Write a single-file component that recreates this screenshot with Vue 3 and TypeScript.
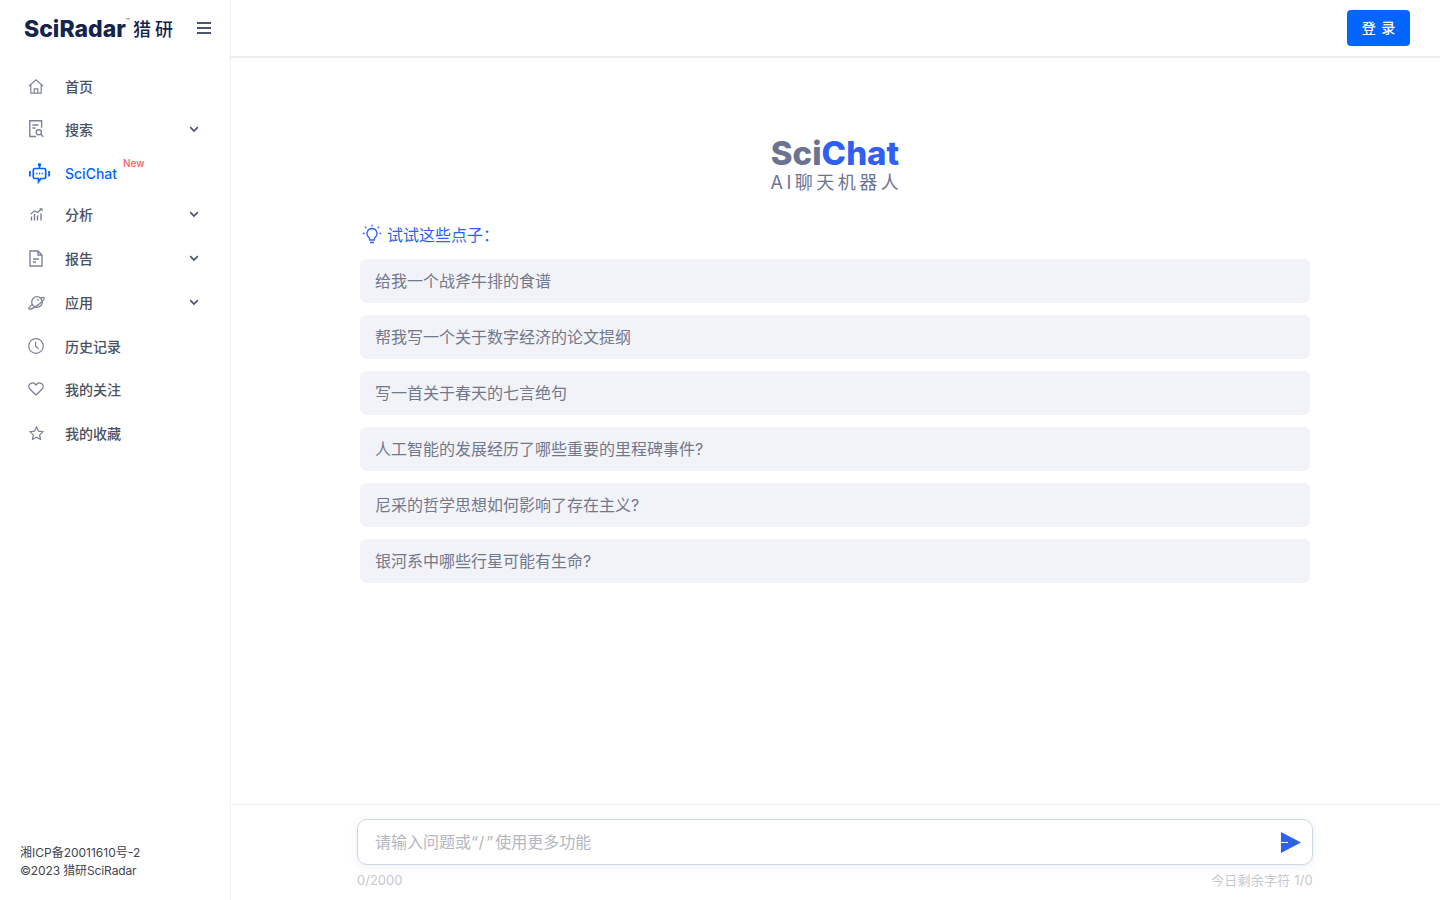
<template>
  <div class="page">
    <aside class="sidebar">
      <div class="brand">
        <span class="brand-name">SciRadar</span>
        <span class="brand-tm">™</span>
        <span class="brand-cn">猎研</span>
        <svg class="burger" width="14" height="12" viewBox="0 0 14 12">
          <path d="M0 1h14M0 6h14M0 11h14" stroke="#4b5470" stroke-width="2" fill="none" />
        </svg>
      </div>

      <nav class="nav">
        <div
          v-for="item in navItems"
          :key="item.label"
          class="nav-item"
          :class="{ active: item.active }"
          :style="{ height: item.height + 'px' }"
        >
          <span class="nav-icon">
            <svg v-if="item.icon === 'home'" width="16" height="15" viewBox="0 0 16 15" fill="none" stroke="#7d8298" stroke-width="1.2">
              <path d="M.8 7.200 8 .8l7.200 6.400M2.800 5.800v8.400h10.400V5.800M6.200 14.200V9.800h3.600v4.400" />
            </svg>
            <svg v-else-if="item.icon === 'search'" width="15" height="18" viewBox="0 0 15 18" fill="none" stroke="#7d8298" stroke-width="1.400">
              <path d="M7 16.500H.8V.8h11.800v7M3.500 5h6M3.500 8h3" />
              <circle cx="9.800" cy="12.300" r="2.600" />
              <path d="m11.800 14.300 2.400 2.400" />
            </svg>
            <svg v-else-if="item.icon === 'bot'" class="bot-icon" width="21" height="21" viewBox="0 0 21 21" fill="none" stroke="#0066ff" stroke-width="1.700">
              <circle cx="10.500" cy="1.700" r="1.700" fill="#0066ff" stroke="none" />
              <path d="M10.500 3v2.500" />
              <path d="M5.800 5.500h9.400a1.500 1.500 0 0 1 1.500 1.500v7a1.500 1.500 0 0 1-1.500 1.500H12L9.500 18.800v-3.300H5.800A1.500 1.500 0 0 1 4.300 14V7a1.500 1.500 0 0 1 1.500-1.500Z" />
              <path d="M.9 8v5.500M20.100 8v5.500" stroke-width="1.800" />
              <path d="M7.200 10.500h1.300M9.900 10.500h1.300M12.500 10.500h1.300" stroke-width="1.500" />
            </svg>
            <svg v-else-if="item.icon === 'chart'" width="13" height="13" viewBox="0 0 13 13" fill="none" stroke="#71768c" stroke-width="1.300">
              <path d="M1.500 12.500V8.500M4.500 12.500V6M7.500 12.500V7.500M11 12.500V5.500" />
              <path d="M.8 6 4.500 2.800 7.500 4.500 11.500 1" stroke-width="1.100" />
              <path d="M9.500.8h2.600v2.400" stroke-width="1" />
            </svg>
            <svg v-else-if="item.icon === 'doc'" width="14" height="17" viewBox="0 0 14 17" fill="none" stroke="#7d8298" stroke-width="1.400">
              <path d="M1 1h8l4 4v11H1ZM9 1v4h4M4 9h6M4 12h3" />
            </svg>
            <svg v-else-if="item.icon === 'planet'" width="17" height="15" viewBox="0 0 17 15" fill="none" stroke="#7d8298" stroke-width="1.300">
              <circle cx="9" cy="7" r="5.300" />
              <path d="M4.200 9.800C1.600 11.800.4 13.400 1 14c1 .7 5-1.200 8.800-3.900 3.800-2.800 6.900-6.100 6.300-7.300-.3-.6-1.800-.6-3.800.2" />
              <path d="M9 4.500l1.500 1" />
            </svg>
            <svg v-else-if="item.icon === 'clock'" width="16" height="16" viewBox="0 0 16 16" fill="none" stroke="#7d8298" stroke-width="1.200">
              <circle cx="8" cy="8" r="7.300" />
              <path d="M7.600 3.800V8.200l3 2.600" />
            </svg>
            <svg v-else-if="item.icon === 'heart'" width="16" height="14" viewBox="0 0 16 14" fill="none" stroke="#7d8298" stroke-width="1.300">
              <path d="M8 13 2 7.200C.3 5.500.5 3 2.200 1.700 4 .5 6.500.9 8 3c1.500-2.100 4-2.500 5.800-1.300C15.500 3 15.700 5.500 14 7.200Z" />
            </svg>
            <svg v-else-if="item.icon === 'star'" width="15" height="14" viewBox="0 0 16 15" fill="none" stroke="#7d8298" stroke-width="1.300">
              <path d="m8 1 2.100 4.500 4.900.6-3.600 3.400.9 4.900L8 12l-4.300 2.400.9-4.900L1 6.100l4.900-.6Z" />
            </svg>
          </span>
          <span class="nav-label">{{ item.label }}<sup v-if="item.active" class="new-tag">New</sup></span>
          <svg v-if="item.arrow" class="chevron" width="10" height="7" viewBox="0 0 10 7" fill="none" stroke="#4b5470" stroke-width="1.700">
            <path d="m1.200 1.200 3.800 3.800 3.800-3.800" />
          </svg>
        </div>
      </nav>

      <div class="legal">
        <div>湘ICP备20011610号-2</div>
        <div class="legal-copy">©2023 猎研SciRadar</div>
      </div>
    </aside>

    <main class="main">
      <header class="topbar">
        <button class="login">登 录</button>
      </header>

      <section class="content">
        <div class="hero">
          <div class="hero-title">Sci<span class="hero-accent">Chat</span></div>
          <div class="hero-sub">AI聊天机器人</div>
        </div>

        <div class="suggestions">
          <div class="try-title">
            <svg width="20" height="20" viewBox="0 0 20 20" fill="none" stroke="#2f5ff5" stroke-width="1.300">
              <path d="M10 4.500a5 5 0 0 0-2.800 9.100l.5 2.400h4.600l.5-2.400A5 5 0 0 0 10 4.500ZM8 18.500h4" />
              <path d="M10 .8v1.800M3 2.800l1.300 1.300M17 2.800l-1.300 1.300M.8 9.500h1.800M17.400 9.500h1.800" />
            </svg>
            <span>试试这些点子：</span>
          </div>
          <div v-for="idea in ideas" :key="idea" class="idea">{{ idea }}</div>
        </div>
      </section>

      <footer class="composer">
        <div class="composer-inner">
          <div class="input-box">
            <span class="placeholder">请输入问题或<span class="quoted">“/”</span>使用更多功能</span>
            <svg width="20" height="21" viewBox="0 0 20 21">
              <path d="M0 0 20 10.500 0 21V11h7v-1H0Z" fill="#2f5ff5" />
            </svg>
          </div>
          <div class="counters">
            <span>0/2000</span>
            <span class="counter-left">今日剩余字符 1/0</span>
          </div>
        </div>
      </footer>
    </main>
  </div>
</template>

<script setup lang="ts">
interface NavItem {
  label: string
  icon: string
  height: number
  arrow?: boolean
  active?: boolean
}

const navItems: NavItem[] = [
  { label: '首页', icon: 'home', height: 44 },
  { label: '搜索', icon: 'search', height: 42, arrow: true },
  { label: 'SciChat', icon: 'bot', height: 42, active: true },
  { label: '分析', icon: 'chart', height: 44, arrow: true },
  { label: '报告', icon: 'doc', height: 44, arrow: true },
  { label: '应用', icon: 'planet', height: 44, arrow: true },
  { label: '历史记录', icon: 'clock', height: 44 },
  { label: '我的关注', icon: 'heart', height: 42 },
  { label: '我的收藏', icon: 'star', height: 46 }
]

const ideas: string[] = [
  '给我一个战斧牛排的食谱',
  '帮我写一个关于数字经济的论文提纲',
  '写一首关于春天的七言绝句',
  '人工智能的发展经历了哪些重要的里程碑事件?',
  '尼采的哲学思想如何影响了存在主义?',
  '银河系中哪些行星可能有生命?'
]
</script>

<style scoped>
.page {
  display: flex;
  width: 1440px;
  height: 900px;
  overflow: hidden;
  background: #fff;
  font-family: Inter, "Noto Sans CJK SC", sans-serif;
}

.sidebar {
  display: flex;
  flex-direction: column;
  flex: none;
  width: 230px;
  border-right: 1px solid #f1f2f5;
}

.brand {
  display: flex;
  align-items: center;
  height: 58px;
  padding: 0 19px 0 24px;
  color: #14244d;
}

.brand-name {
  font-size: 23px;
  font-weight: 800;
}

.brand-tm {
  align-self: flex-start;
  width: 7px;
  margin-top: 17px;
  font-size: 6px;
}

.brand-cn {
  margin-bottom: 2px;
  font-size: 18px;
  font-weight: 500;
  letter-spacing: 4px;
}

.burger {
  margin: 0 0 2px auto;
}

.nav {
  display: flex;
  flex-direction: column;
  flex: 1;
  padding-top: 6px;
}

.nav-item {
  display: flex;
  align-items: center;
  box-sizing: border-box;
  padding-left: 26px;
  font-size: 14px;
  font-weight: 500;
  color: #4a5162;
}

.nav-item.active {
  padding-top: 4px;
  color: #0066ff;
}

.nav-icon {
  display: flex;
  align-items: center;
  justify-content: center;
  width: 20px;
  margin-right: 19px;
}

.nav-icon svg {
  flex: none;
}

.bot-icon {
  margin-left: 7px;
}

.nav-label {
  position: relative;
  flex: 1;
}

.new-tag {
  position: absolute;
  top: -8px;
  left: 58px;
  font-size: 10px;
  line-height: 12px;
  color: #ff5b62;
}

.chevron {
  margin-right: 31px;
}

.legal {
  padding: 0 0 20px 20px;
  font-size: 12px;
  line-height: 18px;
  color: #3f4450;
}

.legal-copy {
  letter-spacing: -0.12px;
}

.main {
  display: flex;
  flex-direction: column;
  flex: 1;
  min-width: 0;
}

.topbar {
  display: flex;
  align-items: center;
  justify-content: flex-end;
  flex: none;
  height: 56px;
  padding-right: 30px;
  border-bottom: 2px solid #eeeeee;
}

.login {
  width: 63px;
  height: 36px;
  padding: 0 0 2px 1px;
  border: 0;
  border-radius: 4px;
  background: #0066ff;
  color: #fff;
  font-family: inherit;
  font-size: 14px;
  font-weight: 500;
  letter-spacing: 1px;
}

.content {
  display: flex;
  flex-direction: column;
  align-items: center;
  flex: 1;
  padding-right: 1px;
}

.hero {
  display: flex;
  flex-direction: column;
  align-items: center;
  margin-top: 77px;
}

.hero-title {
  font-size: 33px;
  line-height: 37px;
  font-weight: 800;
  color: #6b7391;
}

.hero-accent {
  color: #2f5ff5;
}

.hero-sub {
  margin-top: 1px;
  padding-left: 3px;
  font-size: 18px;
  line-height: 20px;
  letter-spacing: 3.500px;
  color: #6b7391;
}

.suggestions {
  display: flex;
  flex-direction: column;
  gap: 12px;
  width: 950px;
  margin-top: 29px;
}

.try-title {
  display: flex;
  align-items: center;
  gap: 5px;
  height: 24px;
  margin-bottom: 1px;
  padding-left: 2px;
  font-size: 16px;
  color: #2f5ff5;
}

.idea {
  height: 44px;
  padding-left: 15px;
  border-radius: 6px;
  background: #f2f3f8;
  font-size: 16px;
  line-height: 44px;
  color: #72788c;
}

.composer {
  flex: none;
  height: 95px;
  padding-right: 1px;
  border-top: 1px solid #eff1f6;
}

.composer-inner {
  width: 956px;
  margin: 14px auto 0;
}

.input-box {
  display: flex;
  align-items: center;
  justify-content: space-between;
  box-sizing: border-box;
  height: 46px;
  padding: 0 11px 0 17px;
  border: 1px solid #cdd5e8;
  border-radius: 10px;
  box-shadow: 0 2px 8px rgba(120, 135, 190, 0.12);
}

.placeholder {
  font-size: 16px;
  line-height: 22px;
  color: #b4b7bf;
}

.quoted {
  letter-spacing: 2px;
}

.counters {
  display: flex;
  justify-content: space-between;
  margin-top: 6px;
  font-size: 13px;
  line-height: 18px;
  color: #c6c8cc;
}

.counter-left {
  letter-spacing: 0.2px;
}
</style>
